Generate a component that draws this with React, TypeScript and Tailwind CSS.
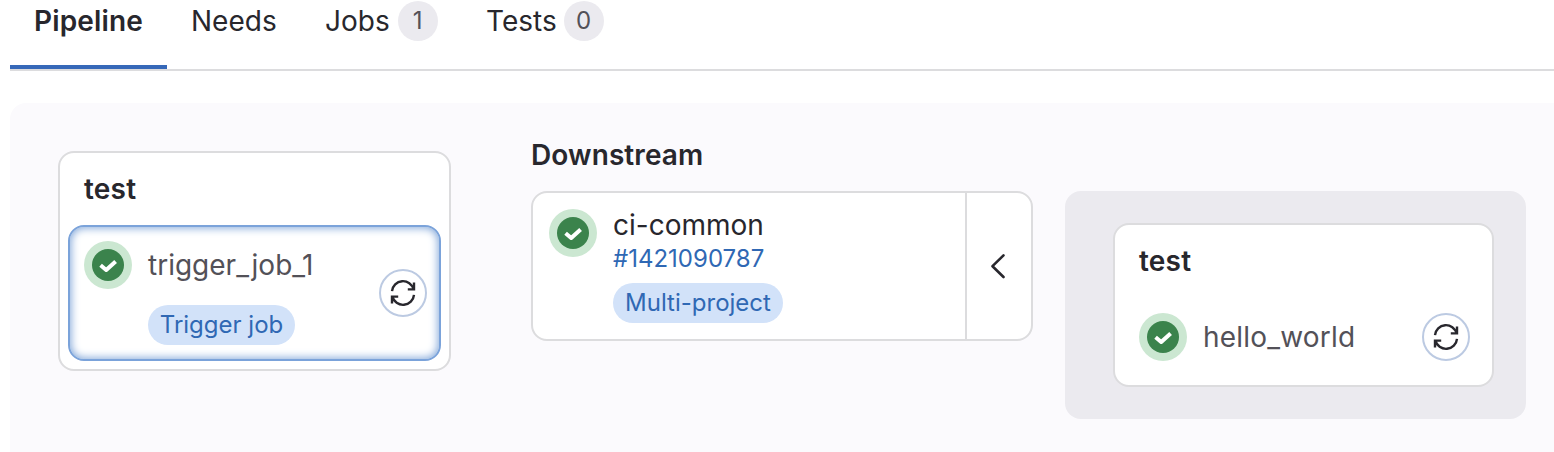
import type { ReactNode } from 'react';

type Tab = {
  label: string;
  count?: number;
  className: string;
};

const tabs: Tab[] = [
  { label: 'Pipeline', className: 'w-[157px] border-[#3668b8] font-semibold tracking-[0.15px]' },
  { label: 'Needs', className: 'w-[134px] border-transparent' },
  { label: 'Jobs', count: 1, className: 'w-[161px] gap-2 border-transparent' },
  { label: 'Tests', count: 0, className: 'w-[166px] gap-[7px] border-transparent' },
];

const StatusIcon = () => (
  <svg className="size-12 shrink-0" viewBox="0 0 48 48" fill="none" aria-label="Passed">
    <circle cx="24" cy="24" r="24" fill="#cbe7d1" />
    <circle cx="24" cy="24" r="16" fill="#3b834c" />
    <path d="M16.600 24.200l5.600 4.800 9.400-8.600" stroke="#fff" strokeWidth="4" strokeLinejoin="round" />
  </svg>
);

const RetryButton = () => (
  <button
    className="flex size-12 shrink-0 items-center justify-center rounded-full border-2 border-[#bccae2] bg-white text-[#28272d]"
    aria-label="Run again"
  >
    <svg className="size-8" viewBox="-16 -16 32 32" fill="none" stroke="currentColor" strokeWidth="2.4">
      <path d="M-11 -1.8A11 11 0 0 1 10.6 -3.6" />
      <path d="M11 -10.6V-3.6H4.8" />
      <path d="M11 1.8A11 11 0 0 1 -10.6 3.6" />
      <path d="M-11 10.6V3.6H-4.8" />
    </svg>
  </button>
);

const Pill = ({ children, className }: { children: ReactNode; className: string }) => (
  <span
    className={`flex h-10 items-center justify-center rounded-full bg-[#d2e2f9] text-2xl whitespace-nowrap text-[#2f68b4] ${className}`}
  >
    {children}
  </span>
);

const App = () => {
  return (
    <div className="h-[452px] w-[1554px] overflow-hidden bg-white pl-[10px] font-['Inter',sans-serif] text-[28px] text-[#28272d]">
      <nav className="flex border-b-2 border-[#dcdcde] pt-px">
        {tabs.map((tab) => (
          <a key={tab.label} className={`flex h-[68px] border-b-4 pl-6 leading-10 ${tab.className}`}>
            <span>{tab.label}</span>
            {tab.count !== undefined && (
              <span className="flex size-10 items-center justify-center rounded-full bg-[#ebeaef] text-2xl text-[#535158]">
                {tab.count}
              </span>
            )}
          </a>
        ))}
      </nav>

      <main className="mt-8 flex h-[349px] items-start rounded-tl-2xl bg-[#fbfafd] pl-12">
        {/* Upstream stage */}
        <section className="mt-12 h-[220px] w-[393px] rounded-2xl border-2 border-[#dcdcde] bg-white p-2">
          <h2 className="mt-2 mb-4 pl-4 leading-10 font-semibold tracking-[0.2px]">test</h2>
          <div className="flex h-[136px] w-[373px] rounded-2xl border-2 border-[#7ba3da] py-3.5 pr-3 pl-3.5 shadow-[inset_0_0_8px_1px_#7fa5d8]">
            <StatusIcon />
            <div className="ml-4 flex-1">
              <div className="leading-[48px] text-[#535158]">trigger_job_1</div>
              <Pill className="mt-4 w-[147px]">Trigger job</Pill>
            </div>
            <div className="self-center">
              <RetryButton />
            </div>
          </div>
        </section>

        {/* Linked pipelines */}
        <section className="mt-8 ml-20 w-[502px]">
          <h2 className="mb-4 leading-10 font-semibold tracking-[0.1px]">Downstream</h2>
          <div className="flex h-[150px] rounded-2xl border-2 border-[#dcdcde] bg-white">
            <div className="flex flex-1 pt-4 pl-4">
              <StatusIcon />
              <div className="ml-4">
                <div className="leading-8">ci-common</div>
                <a className="block pt-px text-2xl leading-[33px] text-[#2f68b4]">#1421090787</a>
                <Pill className="mt-2 w-[170px]">Multi-project</Pill>
              </div>
            </div>
            <button className="flex w-[66px] items-center justify-center border-l-2 border-[#dcdcde]" aria-label="Collapse">
              <svg className="size-8" viewBox="0 0 32 32" fill="none" stroke="currentColor" strokeWidth="2.6">
                <path d="M20.500 5.300L9.500 16.200L20.500 27" strokeLinecap="round" strokeLinejoin="round" />
              </svg>
            </button>
          </div>
        </section>

        <section className="mt-[88px] ml-8 h-[228px] w-[461px] rounded-2xl bg-[#ebeaef] py-8 pl-12">
          <div className="h-[164px] w-[381px] rounded-2xl border-2 border-[#dcdcde] bg-white pt-4 pr-[22px] pl-6">
            <h2 className="leading-10 font-semibold tracking-[0.2px]">test</h2>
            <div className="mt-8 flex items-center">
              <StatusIcon />
              <span className="ml-4 flex-1 tracking-[0.2px] text-[#535158]">hello_world</span>
              <RetryButton />
            </div>
          </div>
        </section>
      </main>
    </div>
  );
};

export default App;
